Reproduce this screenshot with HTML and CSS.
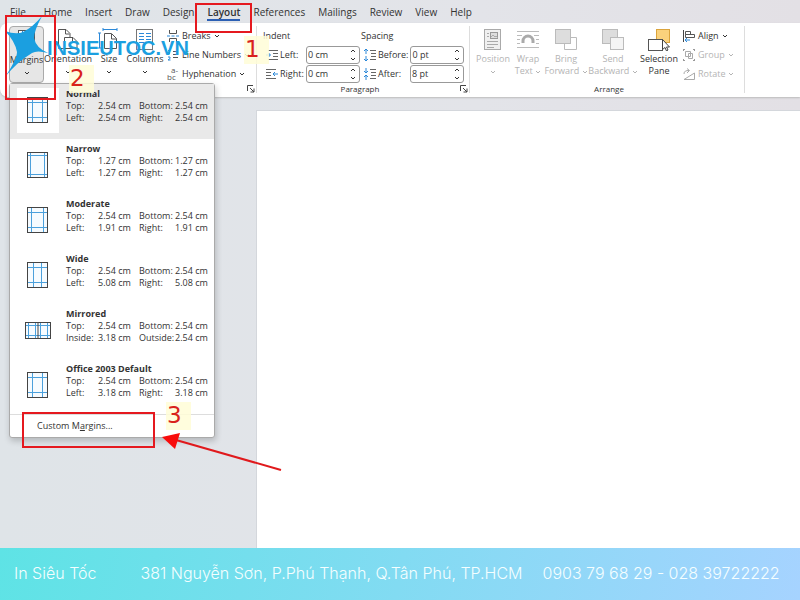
FILE: index.html
```
<!DOCTYPE html>
<html lang="en">
<head>
  <meta charset="UTF-8">
  <meta name="viewport" content="width=device-width, initial-scale=1.0">
  <title>Word - Custom Margins - In Siêu Tốc</title>
  <link rel="stylesheet" href="styles.css">
</head>
<body>
  <!-- shared icons -->
  <svg class="defs" width="0" height="0">
    <symbol id="chev" viewBox="0 0 6 4"><path d="M1 1l2 2 2-2" fill="none" stroke="currentColor"/></symbol>
    <symbol id="chev-up" viewBox="0 0 6 4"><path d="M1 3l2-2 2 2" fill="none" stroke="currentColor"/></symbol>
    <symbol id="launch" viewBox="0 0 8 8"><path d="M.5 6V.5H6M3 3l4 4M7 3.500V7H3.500" fill="none" stroke="#444"/></symbol>
  </svg>

  <nav class="tabs">
    <a href="#" class="file">File</a>
    <a href="#">Home</a>
    <a href="#">Insert</a>
    <a href="#">Draw</a>
    <a href="#">Design</a>
    <a href="#" class="active">Layout</a>
    <a href="#">References</a>
    <a href="#">Mailings</a>
    <a href="#">Review</a>
    <a href="#">View</a>
    <a href="#">Help</a>
  </nav>

  <div class="ribbon">
    <section class="group setup">
      <div class="tools">
        <button class="big selected w-margins">
          <svg width="22" height="23" viewBox="0 0 22 23"><rect x="2.500" y="1.500" width="16" height="20" fill="#fff" stroke="#555"/><path d="M6.500 2v19M14.500 2v19M3 5.500h15M3 17.500h15" stroke="#2b88d8"/></svg>
          <span>Margins</span>
          <svg class="chev" width="6" height="4"><use href="#chev"/></svg>
        </button>
        <button class="big w-orient">
          <svg width="22" height="23" viewBox="0 0 22 23"><path d="M7 20.500H1.500v-19H9l4 4V9M8.500 2v4h4" fill="none" stroke="#555"/><path d="M7.500 9.500H16l4 4v7H7.500zM15.500 10v4h4" fill="#fff" stroke="#555"/></svg>
          <span>Orientation</span>
          <svg class="chev" width="6" height="4"><use href="#chev"/></svg>
        </button>
        <button class="big w-size">
          <svg width="22" height="23" viewBox="0 0 22 23"><path d="M5 1.500h14M5 0v3M19 0v3M1.500 5v15M0 5h3M0 20h3" stroke="#2b88d8" fill="none"/><path d="M6.500 5.500h7l5 5v10h-12zM13.500 6v5h5" fill="#fff" stroke="#555"/></svg>
          <span>Size</span>
          <svg class="chev" width="6" height="4"><use href="#chev"/></svg>
        </button>
        <button class="big w-columns">
          <svg width="22" height="23" viewBox="0 0 22 23"><rect x="2.500" y="1.500" width="16" height="20" fill="#fff" stroke="#777"/><path d="M5 5.500h5M5 8.500h5M5 11.500h5M5 14.500h5M12 5.500h5M12 8.500h5M12 11.500h5M12 14.500h5" stroke="#2b88d8"/></svg>
          <span>Columns</span>
          <svg class="chev" width="6" height="4"><use href="#chev"/></svg>
        </button>
        <div class="stack">
          <button class="small"><svg width="12" height="12" viewBox="0 0 12 12"><path d="M2.500 0v3.500h7V0M2.500 12V8.500h7V12" fill="none" stroke="#555"/><path d="M0 6h3M4.500 6h3M9 6h3" stroke="#2b88d8"/></svg><span>Breaks</span><svg class="chev" width="6" height="4"><use href="#chev"/></svg></button>
          <button class="small"><svg width="12" height="12" viewBox="0 0 12 12"><path d="M1 1.500h1.500V5M1 8h2v1.500L1 11h2.500" fill="none" stroke="#2b88d8"/><path d="M6 2.500h5M6 5.500h5M6 8.500h5" stroke="#555"/></svg><span>Line Numbers</span><svg class="chev" width="6" height="4"><use href="#chev"/></svg></button>
          <button class="small"><svg class="hyph" width="12" height="14" viewBox="0 0 12 14"><text x="4" y="6">a-</text><text x="0" y="13">bc</text></svg><span>Hyphenation</span><svg class="chev" width="6" height="4"><use href="#chev"/></svg></button>
        </div>
      </div>
      <div class="caption"><button class="launch" aria-label="Page Setup options"><svg width="8" height="8"><use href="#launch"/></svg></button></div>
    </section>

    <section class="group paragraph">
      <div class="fields">
        <div class="col">
          <div class="head">Indent</div>
          <div class="field">
            <svg width="12" height="12" viewBox="0 0 12 12"><path d="M2 1.500h10M7 4.500h5M7 7.500h5M2 10.500h10" stroke="#666"/><path d="M0 6h4M2.500 4l2 2-2 2" fill="none" stroke="#2b88d8"/></svg>
            <label for="left">Left:</label>
            <div class="spin"><input id="left" value="0 cm"><span><svg width="6" height="4"><use href="#chev-up"/></svg><svg width="6" height="4"><use href="#chev"/></svg></span></div>
          </div>
          <div class="field">
            <svg width="12" height="12" viewBox="0 0 12 12"><path d="M0 1.500h10M0 4.500h5M0 7.500h5M0 10.500h10" stroke="#666"/><path d="M7 6h5M9 4L7 6l2 2" fill="none" stroke="#2b88d8"/></svg>
            <label for="right">Right:</label>
            <div class="spin"><input id="right" value="0 cm"><span><svg width="6" height="4"><use href="#chev-up"/></svg><svg width="6" height="4"><use href="#chev"/></svg></span></div>
          </div>
        </div>
        <div class="col spacing">
          <div class="head">Spacing</div>
          <div class="field">
            <svg width="12" height="12" viewBox="0 0 12 12"><path d="M6 1.500h6M7 4.500h5M7 7.500h5M6 10.500h6" stroke="#666"/><path d="M2 0v5M2 7v5M0 2l2-2 2 2M0 10l2 2 2-2" fill="none" stroke="#2b88d8"/></svg>
            <label for="before">Before:</label>
            <div class="spin"><input id="before" value="0 pt"><span><svg width="6" height="4"><use href="#chev-up"/></svg><svg width="6" height="4"><use href="#chev"/></svg></span></div>
          </div>
          <div class="field">
            <svg width="12" height="12" viewBox="0 0 12 12"><path d="M6 1.500h6M7 4.500h5M7 7.500h5M6 10.500h6" stroke="#666"/><path d="M2 0v5M2 7v5M0 3l2 2 2-2M0 9l2-2 2 2" fill="none" stroke="#2b88d8"/></svg>
            <label for="after">After:</label>
            <div class="spin"><input id="after" value="8 pt"><span><svg width="6" height="4"><use href="#chev-up"/></svg><svg width="6" height="4"><use href="#chev"/></svg></span></div>
          </div>
        </div>
      </div>
      <div class="caption">Paragraph<button class="launch" aria-label="Paragraph options"><svg width="8" height="8"><use href="#launch"/></svg></button></div>
    </section>

    <section class="group arrange">
      <div class="tools">
        <button class="big w-position" disabled>
          <svg width="22" height="23" viewBox="0 0 22 23"><rect x="2.500" y="1.500" width="16" height="20" fill="#f0f0f0" stroke="#aaa"/><rect x="8.500" y="4.500" width="7" height="6" fill="#ddd" stroke="#999"/><path d="M9 9l2-2 2 2 1-1 2 2M5 5.500h2M5 8.500h2M5 13.500h11M5 16.500h11M5 19.500h7" fill="none" stroke="#aaa"/></svg>
          <span>Position</span>
          <svg class="chev" width="6" height="4"><use href="#chev"/></svg>
        </button>
        <button class="big w-wrap" disabled>
          <svg width="22" height="23" viewBox="0 0 22 23"><path d="M0 3.500h22M0 7.500h5M17 7.500h5M0 11.500h3M19 11.500h3M0 15.500h3M19 15.500h3M0 19.500h22" stroke="#bbb"/><path d="M6 15v-2a5 5 0 0 1 10 0v2" fill="none" stroke="#aaa" stroke-width="3"/></svg>
          <span>Wrap<br>Text <svg width="6" height="4"><use href="#chev"/></svg></span>
        </button>
        <button class="big w-bring" disabled>
          <svg width="22" height="23" viewBox="0 0 22 23"><path d="M16 9.500h5.500v12h-12V16" fill="#fff" stroke="#bbb"/><rect x=".5" y="1.500" width="15" height="14" fill="#ddd" stroke="#bbb"/></svg>
          <span>Bring<br>Forward <svg width="6" height="4"><use href="#chev"/></svg></span>
        </button>
        <button class="big w-send" disabled>
          <svg width="22" height="23" viewBox="0 0 22 23"><rect x=".5" y="1.500" width="15" height="14" fill="#ddd" stroke="#bbb"/><rect x="8.500" y="9.500" width="13" height="12" fill="#f4f4f4" stroke="#bbb"/></svg>
          <span>Send<br>Backward <svg width="6" height="4"><use href="#chev"/></svg></span>
        </button>
        <button class="big w-select">
          <svg width="22" height="23" viewBox="0 0 22 23"><rect x="8.500" y="1.500" width="13" height="13" fill="#fbd27c" stroke="#dba43c"/><rect x=".5" y="11.500" width="14" height="11" fill="#fff" stroke="#555"/><path d="M14.500 11.500v10l2.500-2 1.500 3.500 1.500-1-1.500-3h3z" fill="#fff" stroke="#444"/></svg>
          <span>Selection<br>Pane</span>
        </button>
        <div class="stack">
          <button class="small"><svg width="12" height="12" viewBox="0 0 12 12"><path d="M.5 0v12" stroke="#444"/><path d="M2.500 1.500h5v3h-5zM2.500 4.500h9v3h-9z" fill="#fff" stroke="#555"/><path d="M2 10h5M4 8l-2 2 2 2" fill="none" stroke="#2b88d8"/></svg><span>Align</span><svg class="chev" width="6" height="4"><use href="#chev"/></svg></button>
          <button class="small" disabled><svg width="12" height="12" viewBox="0 0 12 12"><path d="M2.500 2.500h5v5h-5zM5.500 4.500h4v5h-4z" fill="none" stroke="#aaa"/><path d="M0 .5h2M.5 0v2M10 .5h2M11.500 0v2M0 11.500h2M.5 10v2M10 11.500h2M11.500 10v2" stroke="#999"/></svg><span>Group</span><svg class="chev" width="6" height="4"><use href="#chev"/></svg></button>
          <button class="small" disabled><svg width="12" height="12" viewBox="0 0 12 12"><path d="M1 11.500h10.500V5zM1 6C1 3 3 2.500 6 2.500M4 .5l2.500 2L4 5" fill="none" stroke="#aaa"/></svg><span>Rotate</span><svg class="chev" width="6" height="4"><use href="#chev"/></svg></button>
        </div>
      </div>
      <div class="caption">Arrange</div>
    </section>
  </div>

  <main class="workspace">
    <div class="paper"></div>
  </main>

  <footer>
    <span>In Siêu Tốc</span>
    <span class="address">381 Nguyễn Sơn, P.Phú Thạnh, Q.Tân Phú, TP.HCM</span>
    <span class="phone">0903 79 68 29 - 028 39722222</span>
  </footer>

  <!-- margins drop-down -->
  <div class="menu">
    <button class="item current">
      <span class="thumb"><svg width="22" height="27" viewBox="0 0 22 27"><rect x=".5" y=".5" width="20" height="25" fill="#f6fbff" stroke="#444"/><path d="M5.500 1v24M15.500 1v24M1 5.500h19M1 20.500h19" stroke="#4ba0dc"/></svg></span>
      <span class="info"><b>Normal</b><i>Top:</i><i>2.54 cm</i><i>Bottom:</i><i>2.54 cm</i><i>Left:</i><i>2.54 cm</i><i>Right:</i><i>2.54 cm</i></span>
    </button>
    <button class="item">
      <span class="thumb"><svg width="22" height="27" viewBox="0 0 22 27"><rect x=".5" y=".5" width="20" height="25" fill="#f6fbff" stroke="#444"/><path d="M3.500 1v24M17.500 1v24M1 3.500h19M1 22.500h19" stroke="#4ba0dc"/></svg></span>
      <span class="info"><b>Narrow</b><i>Top:</i><i>1.27 cm</i><i>Bottom:</i><i>1.27 cm</i><i>Left:</i><i>1.27 cm</i><i>Right:</i><i>1.27 cm</i></span>
    </button>
    <button class="item">
      <span class="thumb"><svg width="22" height="27" viewBox="0 0 22 27"><rect x=".5" y=".5" width="20" height="25" fill="#f6fbff" stroke="#444"/><path d="M4.500 1v24M16.500 1v24M1 5.500h19M1 20.500h19" stroke="#4ba0dc"/></svg></span>
      <span class="info"><b>Moderate</b><i>Top:</i><i>2.54 cm</i><i>Bottom:</i><i>2.54 cm</i><i>Left:</i><i>1.91 cm</i><i>Right:</i><i>1.91 cm</i></span>
    </button>
    <button class="item">
      <span class="thumb"><svg width="22" height="27" viewBox="0 0 22 27"><rect x=".5" y=".5" width="20" height="25" fill="#f6fbff" stroke="#444"/><path d="M6.500 1v24M14.500 1v24M1 5.500h19M1 20.500h19" stroke="#4ba0dc"/></svg></span>
      <span class="info"><b>Wide</b><i>Top:</i><i>2.54 cm</i><i>Bottom:</i><i>2.54 cm</i><i>Left:</i><i>5.08 cm</i><i>Right:</i><i>5.08 cm</i></span>
    </button>
    <button class="item">
      <span class="thumb"><svg width="27" height="18" viewBox="0 0 27 18"><rect x=".5" y=".5" width="25" height="16" fill="#f6fbff" stroke="#444"/><path d="M3.500 1v15M10.500 1v15M15.500 1v15M22.500 1v15M1 3.500h24M1 13.500h24" stroke="#4ba0dc"/><path d="M13 1v15" stroke="#444"/></svg></span>
      <span class="info"><b>Mirrored</b><i>Top:</i><i>2.54 cm</i><i>Bottom:</i><i>2.54 cm</i><i>Inside:</i><i>3.18 cm</i><i>Outside:</i><i>2.54 cm</i></span>
    </button>
    <button class="item">
      <span class="thumb"><svg width="22" height="27" viewBox="0 0 22 27"><rect x=".5" y=".5" width="20" height="25" fill="#f6fbff" stroke="#444"/><path d="M5.500 1v24M15.500 1v24M1 5.500h19M1 20.500h19" stroke="#4ba0dc"/></svg></span>
      <span class="info"><b>Office 2003 Default</b><i>Top:</i><i>2.54 cm</i><i>Bottom:</i><i>2.54 cm</i><i>Left:</i><i>3.18 cm</i><i>Right:</i><i>3.18 cm</i></span>
    </button>
    <button class="custom">Custom M<u>a</u>rgins...</button>
  </div>

  <!-- watermark -->
  <div class="logo">
    <svg width="44" height="66" viewBox="0 0 44 66"><path d="M39 1Q31 16 31 23Q33 33 45 38Q34 35 29 38Q14 47 2 62Q14 44 14 37Q12 26 2 16Q13 20 20 17Q30 12 39 1z" fill="#1b9fe0"/></svg>
    <span>INSIEUTOC.VN</span>
  </div>

  <!-- step marks -->
  <div class="box box-layout"></div>
  <div class="box box-margins"></div>
  <div class="box box-custom"></div>
  <div class="step step-1">1</div>
  <div class="step step-2">2</div>
  <div class="step step-3">3</div>
  <svg class="arrow" width="122" height="42" viewBox="0 0 122 42"><path d="M15 10l105 30" stroke="#e0191c" stroke-width="2"/><path d="M1 7l18-4-5 16z" fill="#f80c0c"/></svg>
</body>
</html>
```
FILE: styles.css
```
* {
  box-sizing: border-box;
}

body {
  margin: 0;
  min-height: 100vh;
  display: flex;
  flex-direction: column;
  position: relative;
  background: linear-gradient(90deg, #dfe4e8, #e3e4e9 60%, #e3e0e5);
  color: #333;
  font-family: "Open Sans", "Noto Sans", sans-serif;
  font-size: 10px;
  line-height: 12px;
}

button, input {
  font: inherit;
  color: inherit;
  border: 0;
  background: none;
  padding: 0;
  margin: 0;
}

svg {
  flex: none;
}

.defs {
  position: absolute;
}

/* tabs */
.tabs {
  display: flex;
  gap: 13px;
  height: 23px;
  padding: 6px 10px 0;
}

.tabs a {
  color: #333;
  text-decoration: none;
  height: 15px;
}

.tabs .file {
  padding-right: 5px;
}

.tabs .active {
  font-weight: 600;
  border-bottom: 2px solid #2b5fb4;
}

/* ribbon */
.ribbon {
  display: flex;
  height: 74px;
  background: #fff;
  border-radius: 8px 0 0 8px;
  box-shadow: 0 1px 2px #bbb;
  font-size: 9px;
}

.group {
  display: flex;
  flex-direction: column;
  justify-content: space-between;
  margin: 3px 0 4px;
  border-right: 1px solid #ddd;
}

.setup { width: 257px; padding-left: 9px; }
.paragraph { width: 213px; padding-left: 6px; }
.arrange { width: 275px; padding-left: 4px; }

.tools {
  display: flex;
}

.big {
  display: flex;
  flex-direction: column;
  align-items: center;
  height: 57px;
  padding-top: 2px;
  gap: 2px;
  flex: none;
  white-space: nowrap;
}

.big .chev {
  margin-top: 3px;
}

.selected {
  background: #e6e6e6;
  border: 1px solid #aaa;
  border-radius: 4px;
}

.w-margins { width: 35px; }
.w-orient { width: 48px; }
.w-size { width: 34px; }
.w-columns { width: 38px; }
.w-position { width: 38px; }
.w-wrap { width: 32px; }
.w-bring { width: 44px; }
.w-send { width: 50px; }
.w-select { width: 42px; }

button:disabled {
  color: #b4b4b4;
}

.stack {
  display: flex;
  flex-direction: column;
  padding-left: 3px;
}

.small {
  display: flex;
  align-items: center;
  gap: 3px;
  height: 19px;
  white-space: nowrap;
}

.hyph {
  font-size: 8px;
  fill: #555;
}

.caption {
  position: relative;
  height: 12px;
  text-align: center;
  font-size: 8px;
}

.paragraph .caption {
  padding-right: 12px;
}

.launch {
  position: absolute;
  right: 1px;
  top: 2px;
  line-height: 0;
}

.fields {
  display: flex;
  gap: 4px;
}

.col {
  width: 97px;
}

.col.spacing {
  width: 100px;
}

.head {
  height: 19px;
  line-height: 19px;
}

.spacing .head {
  margin-left: -3px;
}

.field {
  display: flex;
  align-items: center;
  gap: 2px;
  height: 19px;
  padding-left: 3px;
}

.spacing .field {
  padding-left: 0;
}

.field label {
  flex: 1;
}

.spin {
  display: flex;
  width: 54px;
  height: 18px;
  padding: 0 4px 0 1px;
  border: 1px solid #999;
  border-radius: 3px;
  align-items: center;
}

.spin input {
  width: 42px;
}

.spin span {
  display: flex;
  flex-direction: column;
  gap: 4px;
}

/* document */
.workspace {
  flex: 1;
  display: flex;
  padding: 13px 0 0 256px;
}

.paper {
  flex: 1;
  background: #fff;
  border: solid #d4d7dc;
  border-width: 1px 0 0 1px;
}

footer {
  display: flex;
  align-items: center;
  height: 52px;
  padding: 0 14px 2px;
  background: linear-gradient(100deg, #5ee3e5, #a6d3ff);
  color: #f4feff;
  font-family: Inter, sans-serif;
  font-size: 16px;
  font-weight: 300;
  white-space: nowrap;
}

.address { margin-left: 44px; }
.phone { margin-left: 20px; }

/* menu */
.menu {
  position: absolute;
  left: 9px;
  top: 83px;
  width: 206px;
  background: #fff;
  border: 1px solid #aaa;
  border-radius: 3px;
  box-shadow: 1px 3px 6px rgba(0, 0, 0, .2);
}

.item {
  display: flex;
  width: 100%;
  height: 55px;
  padding: 4px 5px 0 7px;
  gap: 7px;
  text-align: left;
}

.current {
  background: #e9e9e9;
}

.thumb {
  display: flex;
  align-items: center;
  justify-content: center;
  width: 42px;
  height: 45px;
}

.current .thumb {
  background: #fff;
}

.info {
  display: grid;
  grid-template-columns: 32px 41px 36px 33px;
  grid-auto-rows: 12px;
  font-size: 9px;
  white-space: nowrap;
}

.info b {
  grid-column: 1 / 5;
}

.info i {
  font-style: normal;
}

.custom {
  width: 100%;
  height: 23px;
  padding-left: 27px;
  border-top: 1px solid #ddd;
  text-align: left;
  font-size: 9px;
}

/* watermark */
.logo {
  position: absolute;
  left: 3px;
  top: 15px;
  display: flex;
  align-items: center;
  color: #1b9fe0;
  font: bold 20px "Liberation Sans", sans-serif;
}

.logo svg {
  overflow: visible;
}

/* step marks */
.box {
  position: absolute;
  border: 2px solid #e5191f;
}

.box-layout { left: 195px; top: 3px; width: 57px; height: 30px; }
.box-margins { left: 5px; top: 15px; width: 51px; height: 85px; }
.box-custom { left: 22px; top: 412px; width: 133px; height: 36px; }

.step {
  position: absolute;
  width: 25px;
  height: 28px;
  padding-left: 1px;
  background: rgba(255, 253, 215, .85);
  color: #d9221c;
  font: 23px/26px "DejaVu Sans", sans-serif;
}

.step-1 { left: 244px; top: 36px; }
.step-2 { left: 69px; top: 65px; }
.step-3 { left: 166px; top: 402px; }

.arrow {
  position: absolute;
  left: 161px;
  top: 430px;
}
```
